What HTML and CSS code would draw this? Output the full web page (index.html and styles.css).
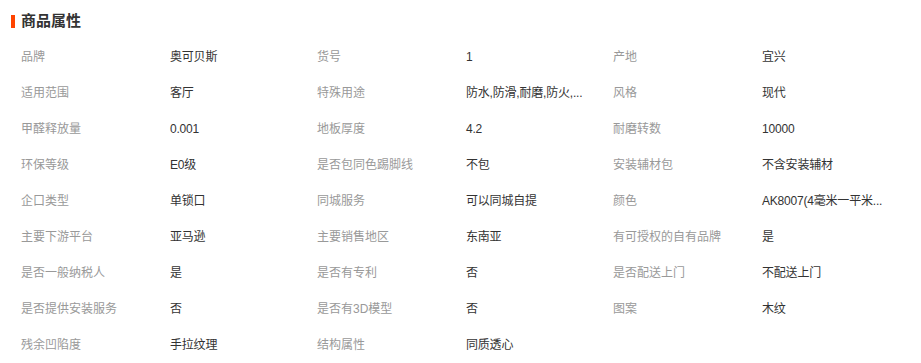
FILE: index.html
```html
<!DOCTYPE html>
<html lang="zh">
<head>
<meta charset="utf-8">
<link rel="stylesheet" href="styles.css">
</head>
<body>
<div class="attrs">
  <div class="title"><span class="bar"></span><span class="title-text">商品属性</span></div>
  <div class="grid">
    <div class="k">品牌</div><div class="v">奥可贝斯</div>
    <div class="k">货号</div><div class="v">1</div>
    <div class="k">产地</div><div class="v">宜兴</div>

    <div class="k">适用范围</div><div class="v">客厅</div>
    <div class="k">特殊用途</div><div class="v">防水,防滑,耐磨,防火,...</div>
    <div class="k">风格</div><div class="v">现代</div>

    <div class="k">甲醛释放量</div><div class="v">0.001</div>
    <div class="k">地板厚度</div><div class="v">4.2</div>
    <div class="k">耐磨转数</div><div class="v">10000</div>

    <div class="k">环保等级</div><div class="v">E0级</div>
    <div class="k">是否包同色踢脚线</div><div class="v">不包</div>
    <div class="k">安装辅材包</div><div class="v">不含安装辅材</div>

    <div class="k">企口类型</div><div class="v">单锁口</div>
    <div class="k">同城服务</div><div class="v">可以同城自提</div>
    <div class="k">颜色</div><div class="v">AK8007(4毫米一平米...</div>

    <div class="k">主要下游平台</div><div class="v">亚马逊</div>
    <div class="k">主要销售地区</div><div class="v">东南亚</div>
    <div class="k">有可授权的自有品牌</div><div class="v">是</div>

    <div class="k">是否一般纳税人</div><div class="v">是</div>
    <div class="k">是否有专利</div><div class="v">否</div>
    <div class="k">是否配送上门</div><div class="v">不配送上门</div>

    <div class="k">是否提供安装服务</div><div class="v">否</div>
    <div class="k">是否有3D模型</div><div class="v">否</div>
    <div class="k">图案</div><div class="v">木纹</div>

    <div class="k">残余凹陷度</div><div class="v">手拉纹理</div>
    <div class="k">结构属性</div><div class="v">同质透心</div>
  </div>
</div>
</body>
</html>
```

FILE: styles.css
```css
html, body {
  margin: 0;
  padding: 0;
  background: #fff;
}
body {
  font-family: "Liberation Sans", "Noto Sans CJK SC", sans-serif;
  font-size: 12px;
  color: #333;
}
.attrs {
  padding: 12px 0 0 11px;
}
.title {
  display: flex;
  align-items: center;
  height: 18px;
  margin-bottom: 9px;
}
.bar {
  width: 4px;
  height: 13px;
  background: #ff4400;
  margin-right: 6px;
}
.title-text {
  font-size: 15px;
  font-weight: bold;
  color: #333;
  line-height: 18px;
}
.grid {
  display: grid;
  grid-template-columns: 149px 147px 149px 147px 149px 150px;
  grid-auto-rows: 36px;
  padding-left: 10px;
}
.k, .v {
  line-height: 36px;
  white-space: nowrap;
}
.k {
  color: #999;
}
.v {
  color: #333;
  letter-spacing: -0.2px;
}
```
